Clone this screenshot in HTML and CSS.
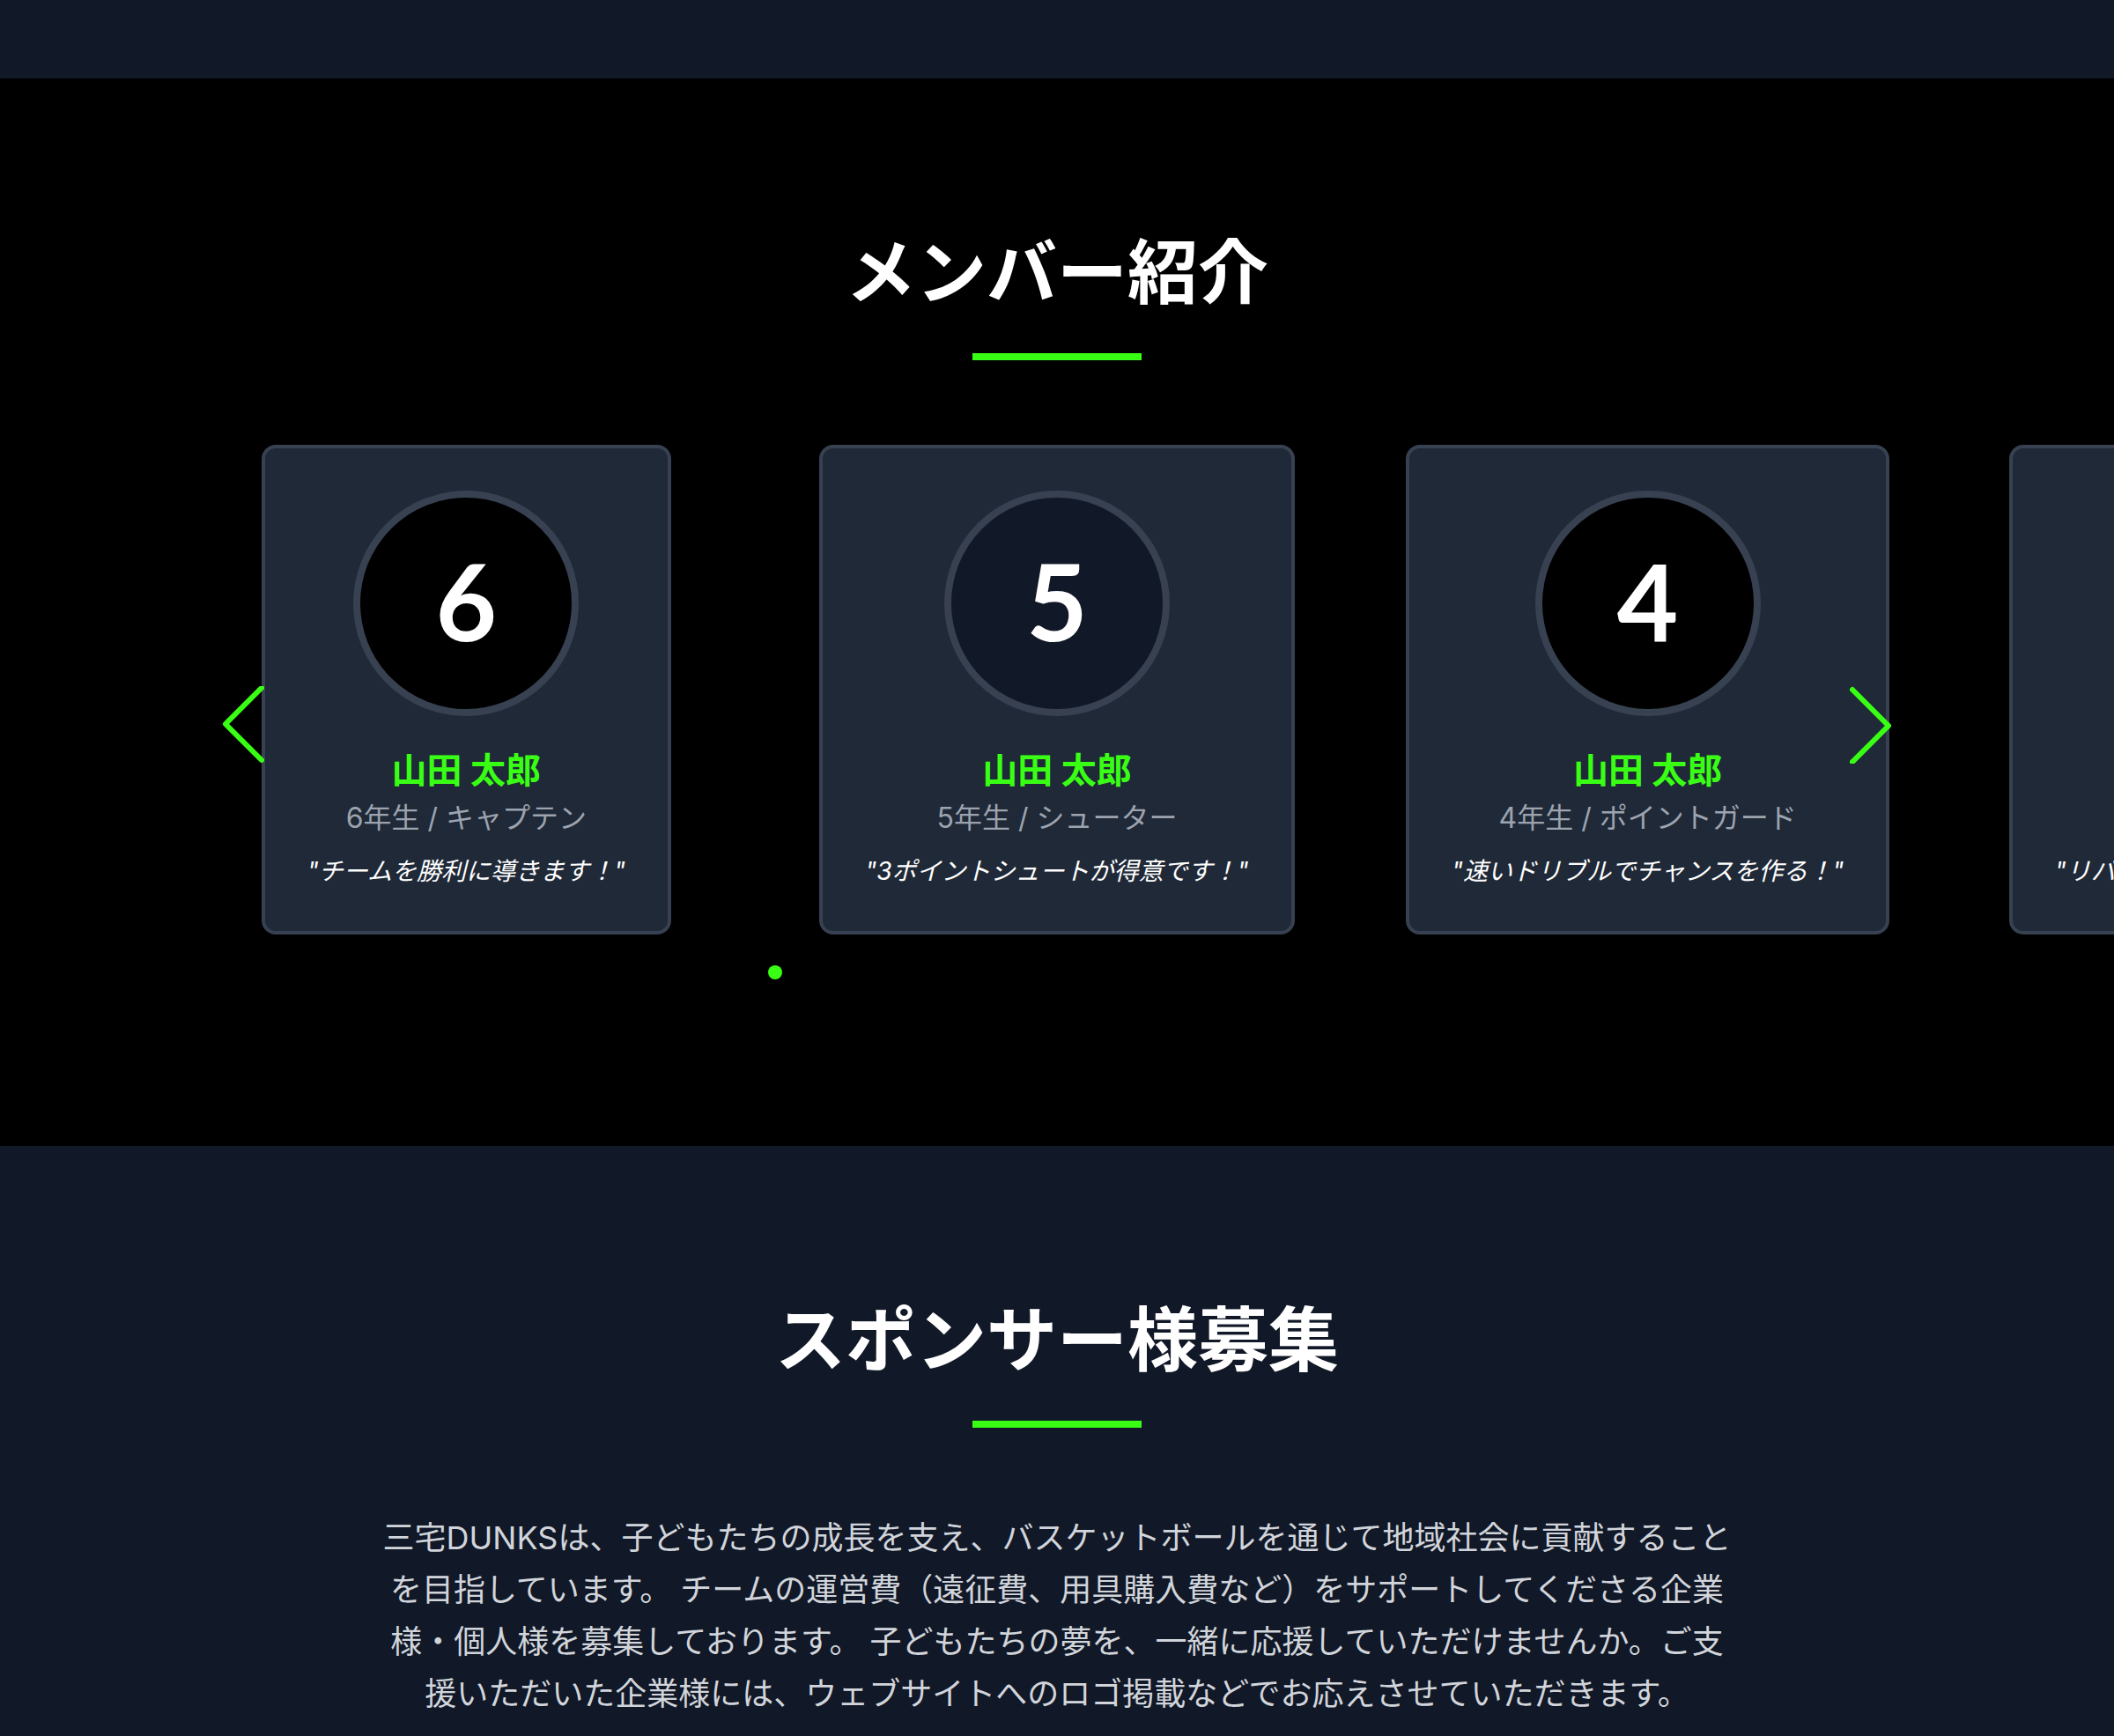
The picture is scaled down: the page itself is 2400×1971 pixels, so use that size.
FILE: index.html
```html
<!DOCTYPE html>
<html lang="ja">
<head>
<meta charset="utf-8">
<meta name="viewport" content="width=device-width, initial-scale=1">
<title>三宅DUNKS</title>
<link rel="stylesheet" href="styles.css">
</head>
<body>
<div class="spacer"></div>
<section class="section members">
  <h2 class="section-title">メンバー紹介</h2>
  <div class="carousel">
    <ul class="slides">
      <li class="slide">
        <article class="card">
          <div class="number number-black">6</div>
          <h3 class="name">山田 太郎</h3>
          <p class="role">6年生 / キャプテン</p>
          <p class="quote">"チームを勝利に導きます！"</p>
        </article>
      </li>
      <li class="slide">
        <article class="card">
          <div class="number">5</div>
          <h3 class="name">山田 太郎</h3>
          <p class="role">5年生 / シューター</p>
          <p class="quote">"3ポイントシュートが得意です！"</p>
        </article>
      </li>
      <li class="slide">
        <article class="card">
          <div class="number number-black">4</div>
          <h3 class="name">山田 太郎</h3>
          <p class="role">4年生 / ポイントガード</p>
          <p class="quote">"速いドリブルでチャンスを作る！"</p>
        </article>
      </li>
      <li class="slide">
        <article class="card">
          <div class="number">7</div>
          <h3 class="name">山田 太郎</h3>
          <p class="role">6年生 / センター</p>
          <p class="quote">"リバウンドは任せてください！"</p>
        </article>
      </li>
    </ul>
    <button class="arrow arrow-prev" type="button" aria-label="前へ">
      <svg viewBox="0 0 48 88" width="48" height="88" fill="none" stroke="currentColor" stroke-width="6" stroke-linecap="round" stroke-linejoin="round"><path d="M45 2 4 43 45 84"/></svg>
    </button>
    <button class="arrow arrow-next" type="button" aria-label="次へ">
      <svg viewBox="0 0 48 88" width="48" height="88" fill="none" stroke="currentColor" stroke-width="6" stroke-linecap="round" stroke-linejoin="round"><path d="M3 4 44 45 3 86"/></svg>
    </button>
    <div class="dots">
      <button class="dot dot-active" type="button" aria-label="1"></button>
      <button class="dot" type="button" aria-label="2"></button>
      <button class="dot" type="button" aria-label="3"></button>
      <button class="dot" type="button" aria-label="4"></button>
      <button class="dot" type="button" aria-label="5"></button>
      <button class="dot" type="button" aria-label="6"></button>
      <button class="dot" type="button" aria-label="7"></button>
      <button class="dot" type="button" aria-label="8"></button>
      <button class="dot" type="button" aria-label="9"></button>
      <button class="dot" type="button" aria-label="10"></button>
      <button class="dot" type="button" aria-label="11"></button>
      <button class="dot" type="button" aria-label="12"></button>
      <button class="dot" type="button" aria-label="13"></button>
      <button class="dot" type="button" aria-label="14"></button>
      <button class="dot" type="button" aria-label="15"></button>
      <button class="dot" type="button" aria-label="16"></button>
      <button class="dot" type="button" aria-label="17"></button>
      <button class="dot" type="button" aria-label="18"></button>
      <button class="dot" type="button" aria-label="19"></button>
      <button class="dot" type="button" aria-label="20"></button>
      <button class="dot" type="button" aria-label="21"></button>
    </div>
  </div>
</section>
<section class="section sponsors">
  <h2 class="section-title">スポンサー様募集</h2>
  <p class="lead">三宅DUNKSは、子どもたちの成長を支え、バスケットボールを通じて地域社会に貢献することを目指しています。 チームの運営費（遠征費、用具購入費など）をサポートしてくださる企業様・個人様を募集しております。 子どもたちの夢を、一緒に応援していただけませんか。ご支援いただいた企業様には、ウェブサイトへのロゴ掲載などでお応えさせていただきます。</p>
</section>
</body>
</html>
```
FILE: styles.css
```css
:root {
  --accent: #39ff14;
  --night: #111827;
  --panel: #1f2937;
  --line: #374151;
}

* {
  box-sizing: border-box;
  margin: 0;
  padding: 0;
}

body {
  background: var(--night);
  color: #fff;
  font-family: Inter, "Noto Sans CJK JP", sans-serif;
}

.spacer {
  height: 89px;
}

.section {
  overflow: hidden;
  padding: 160px 64px;
}

.members {
  background: #000;
}

.sponsors {
  padding-bottom: 0;
}

.section-title {
  display: flex;
  flex-direction: column;
  align-items: center;
  gap: 32px;
  margin-bottom: 96px;
  font-size: 80px;
  font-weight: 700;
  line-height: 120px;
}

.section-title::after {
  content: "";
  width: 192px;
  height: 8px;
  background: var(--accent);
}

.carousel {
  position: relative;
  max-width: 1948px;
  margin: 0 auto;
}

.slides {
  display: grid;
  grid-auto-flow: column;
  grid-auto-columns: calc((100% - 128px) / 3);
  gap: 64px;
  list-style: none;
}

.slide {
  display: flex;
  justify-content: center;
}

.card {
  display: flex;
  flex-direction: column;
  align-items: center;
  padding: 48px;
  border: 4px solid var(--line);
  border-radius: 16px;
  background: var(--panel);
  text-align: center;
  white-space: nowrap;
}

.number {
  display: flex;
  align-items: center;
  justify-content: center;
  width: 256px;
  height: 256px;
  margin-bottom: 34px;
  padding-bottom: 6px;
  border: 8px solid var(--line);
  border-radius: 50%;
  background: var(--night);
  font-family: Lato, sans-serif;
  font-size: 120px;
  font-weight: 700;
  line-height: 120px;
}

.number-black {
  background: #000;
}

.name {
  color: var(--accent);
  font-size: 40px;
  font-weight: 700;
  line-height: 56px;
}

.role {
  margin-bottom: 14px;
  color: #9ca3af;
  font-size: 32px;
  line-height: 52px;
}

.quote {
  font-size: 28px;
  font-style: italic;
  line-height: 40px;
}

.arrow {
  position: absolute;
  top: 274px;
  width: 48px;
  height: 88px;
  border: 0;
  background: none;
  color: var(--accent);
  cursor: pointer;
}

.arrow svg {
  display: block;
}

.arrow-prev {
  left: 26px;
}

.arrow-next {
  right: 26px;
}

.dots {
  display: flex;
  justify-content: center;
  gap: 16px;
  padding: 35px 0 29px;
}

.dot {
  width: 16px;
  height: 16px;
  border: 0;
  border-radius: 50%;
  background: #000;
  cursor: pointer;
}

.dot-active {
  background: var(--accent);
}

.lead {
  max-width: 1536px;
  margin: 0 auto;
  color: #d1d5db;
  font-size: 36px;
  line-height: 59px;
  text-align: center;
}
```
